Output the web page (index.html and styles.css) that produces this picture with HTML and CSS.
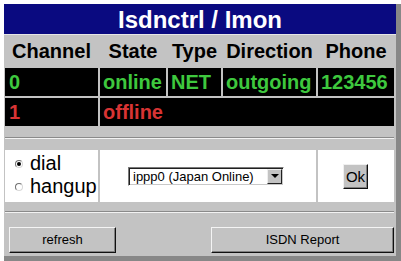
FILE: index.html
```html
<!DOCTYPE html>
<html>
<head>
<meta charset="utf-8">
<link rel="stylesheet" href="styles.css">
</head>
<body>
<div class="window">
  <div class="title">Isdnctrl / Imon</div>
  <div class="grid">
    <div class="th">Channel</div>
    <div class="th">State</div>
    <div class="th">Type</div>
    <div class="th">Direction</div>
    <div class="th">Phone</div>
    <div class="td green">0</div>
    <div class="td green">online</div>
    <div class="td green">NET</div>
    <div class="td green">outgoing</div>
    <div class="td green">123456</div>
    <div class="td red">1</div>
    <div class="td red span4">offline</div>
  </div>
  <div class="rule"></div>
  <div class="controls">
    <div class="cell radios">
      <div class="radio"><span class="dot checked"></span>dial</div>
      <div class="radio"><span class="dot"></span>hangup</div>
    </div>
    <div class="cell selcell">
      <div class="select"><span class="seltext">ippp0 (Japan Online)</span><span class="arrow"><span class="tri"></span></span></div>
    </div>
    <div class="cell okcell"><span class="ok">Ok</span></div>
  </div>
  <div class="rule rule2"></div>
  <div class="buttons">
    <span class="btn refresh">refresh</span>
    <span class="btn report">ISDN Report</span>
  </div>
</div>
</body>
</html>
```
FILE: styles.css
```css
html, body {
  margin: 0;
  padding: 0;
  background: #ffffff;
}
body {
  padding: 4px 0 0 4px;
  font-family: "Liberation Sans", Arial, sans-serif;
}
.window {
  width: 392px;
  height: 252px;
  background: #c3c3c3;
  border-right: 5px solid #878787;
  border-bottom: 5px solid #878787;
  display: flex;
  flex-direction: column;
}
.title {
  height: 30px;
  background: #0a0a80;
  border-bottom: 1px solid #e6e6e6;
  color: #ffffff;
  font-weight: bold;
  font-size: 24px;
  line-height: 31px;
  text-align: center;
}
.grid {
  display: grid;
  grid-template-columns: 93px 66px 53px 93px 76px;
  grid-template-rows: 31px 28px 28px;
  gap: 2px;
  margin-left: 1px;
  width: 389px;
}
.th {
  font-weight: bold;
  font-size: 20px;
  line-height: 33px;
  text-align: center;
  color: #000;
  white-space: nowrap;
}
.td {
  background: #000;
  font-weight: bold;
  font-size: 20px;
  line-height: 28px;
  padding-left: 3px;
  white-space: nowrap;
}
.td:first-child, .grid > .td:nth-child(6), .grid > .td:nth-child(11) {
  padding-left: 4px;
}
.green { color: #3ec83e; }
.red { color: #d83434; }
.span4 { grid-column: span 4; }
.rule {
  margin: 11px 0 0 1px;
  width: 389px;
  height: 0;
  border-top: 1px solid #8a8a8a;
  border-bottom: 1px solid #f2f2f2;
}
.rule2 { margin-top: 9px; }
.controls {
  display: grid;
  grid-template-columns: 93px 216px 76px;
  gap: 2px;
  margin: 11px 0 0 1px;
  width: 389px;
  height: 52px;
}
.cell {
  background: #ffffff;
}
.radios {
  padding: 2px 0 0 10px;
  font-size: 20px;
  line-height: 23px;
  color: #000;
}
.radio { white-space: nowrap; }
.dot {
  display: inline-block;
  box-sizing: border-box;
  width: 8px;
  height: 8px;
  border-radius: 50%;
  border: 1px solid;
  border-color: #707070 #d8d8d8 #d8d8d8 #707070;
  background: #fff;
  margin: 0 7px 2px 0;
  position: relative;
}
.checked::after {
  content: "";
  position: absolute;
  left: 1px;
  top: 1px;
  width: 4px;
  height: 4px;
  border-radius: 50%;
  background: #000;
}
.selcell {
  display: flex;
  align-items: center;
  justify-content: center;
  padding-right: 4px;
}
.select {
  box-sizing: border-box;
  width: 156px;
  height: 19px;
  display: flex;
  align-items: center;
  border: 1px solid;
  border-color: #7a7a7a #ffffff #ffffff #7a7a7a;
  box-shadow: inset 1px 1px 0 #202020, inset -1px -1px 0 #c8c8c8;
  background: #fff;
  padding: 1px;
}
.seltext {
  flex: 1;
  font-size: 13px;
  line-height: 15px;
  padding-left: 3px;
  color: #000;
  white-space: nowrap;
}
.arrow {
  box-sizing: border-box;
  width: 15px;
  height: 15px;
  background: #c3c3c3;
  border: 1px solid;
  border-color: #eeeeee #202020 #202020 #eeeeee;
  display: flex;
  align-items: center;
  justify-content: center;
}
.tri {
  width: 0;
  height: 0;
  border-left: 4px solid transparent;
  border-right: 4px solid transparent;
  border-top: 4px solid #000;
}
.okcell {
  display: flex;
  align-items: center;
  justify-content: center;
  padding-right: 1px;
}
.ok {
  box-sizing: border-box;
  width: 25px;
  height: 25px;
  background: #c3c3c3;
  border: 1px solid;
  border-color: #f0f0f0 #101010 #101010 #f0f0f0;
  box-shadow: inset -1px -1px 0 #808080;
  font-size: 15px;
  line-height: 23px;
  text-align: center;
  color: #000;
}
.buttons {
  display: flex;
  justify-content: space-between;
  margin: 14px 2px 0 5px;
}
.btn {
  box-sizing: border-box;
  height: 26px;
  background: #c3c3c3;
  border: 1px solid;
  border-color: #f4f4f4 #101010 #101010 #f4f4f4;
  box-shadow: inset -1px -1px 0 #808080;
  font-size: 13px;
  line-height: 24px;
  text-align: center;
  color: #000;
}
.refresh { width: 107px; }
.report { width: 183px; }
```
